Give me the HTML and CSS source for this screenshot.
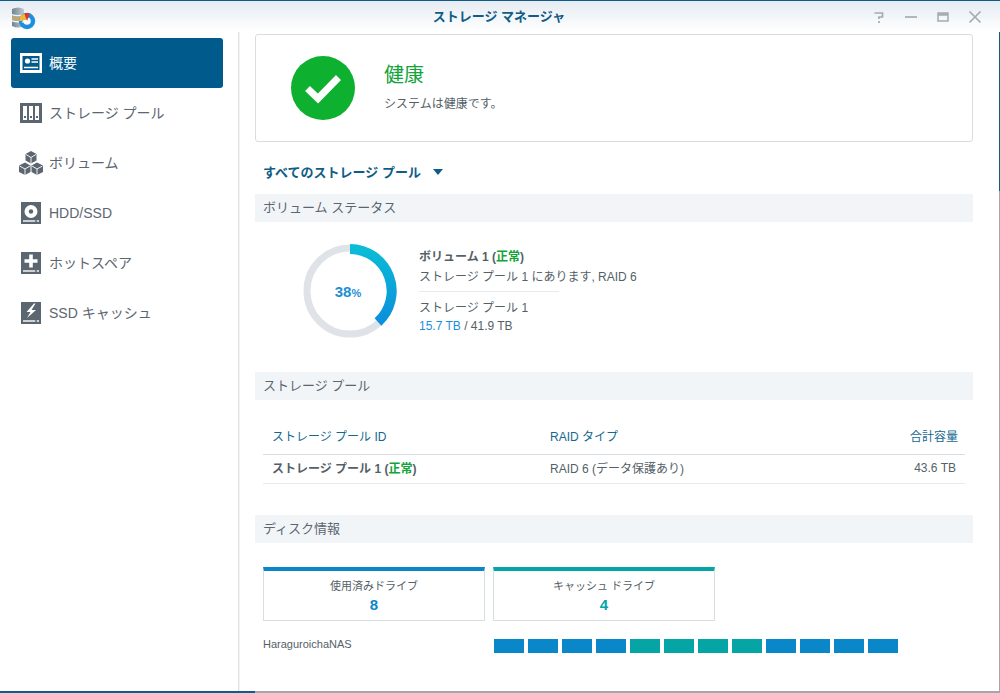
FILE: index.html
```html
<!DOCTYPE html>
<html lang="ja">
<head>
    <meta charset="UTF-8">
    <title>ストレージ マネージャ</title>
    <link rel="stylesheet" href="styles.css">
</head>
<body>
    <div class="window">
        <header class="titlebar">
            <svg class="app-icon" viewBox="0 0 24 24" width="24" height="24">
                <defs>
                    <linearGradient id="dbFill" x1="0" y1="0" x2="1" y2="0">
                        <stop offset="0" stop-color="#6f8494"/>
                        <stop offset="1" stop-color="#c3cbd0"/>
                    </linearGradient>
                </defs>
                <path d="M0 3 Q6 0 12 3 V8 Q6 10 0 8Z M0 9.5 Q6 11.5 12 9.5 V14 Q6 16 0 14Z M0 15.5 Q6 17.5 12 15.5 V20 Q6 23 0 20Z" fill="url(#dbFill)"/>
                <path d="M0 9.5 Q6 11.5 12 9.5 V14 Q6 16 0 14Z" fill="#b9a878"/>
                <circle cx="15" cy="15" r="6" fill="none" stroke="#1d8fe0" stroke-width="4.4"/>
                <path d="M15 15 L7 15 A8 8 0 0 1 12.5 7.4 Z" fill="#f0b53a"/>
                <path d="M15 15 L12.5 7.4 A8 8 0 0 1 18 7.6 Z" fill="#d8382e"/>
                <path d="M9.5 16.5H15V14H12Z" fill="#fff"/>
            </svg>
            <h1 class="title">ストレージ マネージャ</h1>
            <div class="win-buttons">
                <svg viewBox="0 0 14 14" width="14" height="14"><path d="M2.5 3 H10.5 V7 H7 V9 M7 11 V13" fill="none" stroke="#a3abb2" stroke-width="1.7"/></svg>
                <svg viewBox="0 0 14 14" width="14" height="14"><path d="M1 7 H13" stroke="#a3abb2" stroke-width="1.7"/></svg>
                <svg viewBox="0 0 14 14" width="14" height="14"><path d="M2 3 H12 V11 H2 Z" fill="none" stroke="#a3abb2" stroke-width="1.5"/><path d="M2 4.5 H12" stroke="#a3abb2" stroke-width="2.5"/></svg>
                <svg viewBox="0 0 14 14" width="14" height="14"><path d="M1.5 1.5 L12.5 12.5 M12.5 1.5 L1.5 12.5" stroke="#a3abb2" stroke-width="1.7"/></svg>
            </div>
        </header>

        <div class="body-row">
            <nav class="sidebar">
                <a class="nav-item active">
                    <svg viewBox="0 0 22 20" width="22" height="20"><path fill-rule="evenodd" fill="currentColor" d="M0 0H22V20H0Z M2.5 3V17H19.5V3Z"/><circle cx="7.5" cy="8" r="2.6" fill="currentColor"/><path d="M4 14.5H18M11.5 6H18M11.5 9H18" stroke="currentColor" stroke-width="1.5"/></svg>
                    <span>概要</span>
                </a>
                <a class="nav-item">
                    <svg viewBox="0 0 22 20" width="22" height="20"><path fill-rule="evenodd" fill="currentColor" d="M0 0H22V20H0Z M3 3V17H7V3Z M9 3V17H13V3Z M15 3V17H19V3Z"/><path d="M4 13H6V15H4Z M10 13H12V15H10Z M16 13H18V15H16Z" fill="currentColor"/></svg>
                    <span>ストレージ プール</span>
                </a>
                <a class="nav-item">
                    <svg class="cubes" viewBox="0 0 26 26" width="26" height="26">
                        <path fill="currentColor" d="M13 1L18.5 4V10.5L13 13.5L7.5 10.5V4Z M7 12.5L12.5 15.5V22L7 25L1 22V15.5Z M19 12.5L25 15.5V22L19 25L13.5 22V15.5Z"/>
                        <path d="M8 4.5L13 7.5L18 4.5M13 7.5V13M1.5 16L7 19L12 16M7 19V25M14 16L19 19L24.5 16M19 19V25" fill="none" stroke="#fff" stroke-width="0.9"/>
                    </svg>
                    <span>ボリューム</span>
                </a>
                <a class="nav-item">
                    <svg viewBox="0 0 20 22" width="20" height="22"><path fill="currentColor" fill-rule="evenodd" d="M0 0H20V22H0Z M10 3A6.5 6.5 0 1 0 10 16A6.5 6.5 0 1 0 10 3Z"/><circle cx="10" cy="9.5" r="2.2" fill="currentColor"/><path d="M2 19H18" stroke="#fff" stroke-width="1.4"/><path d="M14 19H16" stroke="currentColor" stroke-width="1.4"/></svg>
                    <span class="latin">HDD/SSD</span>
                </a>
                <a class="nav-item">
                    <svg viewBox="0 0 20 22" width="20" height="22"><path fill="currentColor" d="M0 0H20V22H0Z"/><path d="M10 2.5V15.5M3.5 9H16.5" stroke="#fff" stroke-width="3.6"/><path d="M2 19H18" stroke="#fff" stroke-width="1.4"/><path d="M14 19H16" stroke="currentColor" stroke-width="1.4"/></svg>
                    <span>ホットスペア</span>
                </a>
                <a class="nav-item">
                    <svg viewBox="0 0 20 22" width="20" height="22"><path fill="currentColor" d="M0 0H20V22H0Z"/><path d="M13 1.5L5.5 10H9.5L6 16L15 8H10.5L14.5 1.5Z" fill="#fff"/><path d="M2 19H18" stroke="#fff" stroke-width="1.4"/><path d="M14 19H16" stroke="currentColor" stroke-width="1.4"/></svg>
                    <span>SSD キャッシュ</span>
                </a>
            </nav>

            <main class="content">
                <section class="health">
                    <svg class="health-icon" viewBox="0 0 64 64" width="64" height="64">
                        <circle cx="32" cy="32" r="32" fill="#0eb02f"/>
                        <path d="M16.5 32.5L27 42.5L47.5 21.5" fill="none" stroke="#fff" stroke-width="7"/>
                    </svg>
                    <div>
                        <div class="health-title">健康</div>
                        <div class="health-sub">システムは健康です。</div>
                    </div>
                </section>

                <div class="pool-select">すべてのストレージ プール <span class="caret"></span></div>

                <h2 class="section-head">ボリューム ステータス</h2>
                <div class="volume">
                    <div class="donut">
                        <svg viewBox="0 0 94 94" width="94" height="94">
                            <defs>
                                <linearGradient id="ringFill" x1="0" y1="0" x2="0" y2="1">
                                    <stop offset="0" stop-color="#0abcd6"/>
                                    <stop offset="1" stop-color="#0a8fdc"/>
                                </linearGradient>
                            </defs>
                            <circle cx="47" cy="47" r="43" fill="none" stroke="#dfe3e7" stroke-width="7"/>
                            <path d="M47 5 A42 42 0 0 1 75 78" fill="none" stroke="url(#ringFill)" stroke-width="10"/>
                        </svg>
                        <div class="donut-label">38<small>%</small></div>
                    </div>
                    <div class="volume-info">
                        <div class="vol-name">ボリューム 1 (<span class="ok">正常</span>)</div>
                        <div>ストレージ プール 1 にあります, RAID 6</div>
                        <hr class="vol-rule">
                        <div>ストレージ プール 1</div>
                        <div class="vol-usage"><span class="used">15.7 TB</span> / 41.9 TB</div>
                    </div>
                </div>

                <h2 class="section-head">ストレージ プール</h2>
                <table class="pool-table">
                    <thead>
                        <tr><th>ストレージ プール ID</th><th>RAID タイプ</th><th class="right">合計容量</th></tr>
                    </thead>
                    <tbody>
                        <tr><td class="pool-name">ストレージ プール 1 (<span class="ok">正常</span>)</td><td>RAID 6 (データ保護あり)</td><td class="right">43.6 TB</td></tr>
                    </tbody>
                </table>

                <h2 class="section-head">ディスク情報</h2>
                <div class="disk-cards">
                    <div class="disk-card blue">
                        <div class="card-label">使用済みドライブ</div>
                        <div class="card-num">8</div>
                    </div>
                    <div class="disk-card teal">
                        <div class="card-label">キャッシュ ドライブ</div>
                        <div class="card-num">4</div>
                    </div>
                </div>
                <div class="bay-row">
                    <div class="nas-name">HaraguroichaNAS</div>
                    <div class="bays">
                        <i class="bay"></i><i class="bay"></i><i class="bay"></i><i class="bay"></i>
                        <i class="bay cache"></i><i class="bay cache"></i><i class="bay cache"></i><i class="bay cache"></i>
                        <i class="bay"></i><i class="bay"></i><i class="bay"></i><i class="bay"></i>
                    </div>
                </div>
            </main>
        </div>
    </div>
</body>
</html>
```

FILE: styles.css
```css
* {
    box-sizing: border-box;
}

html, body {
    height: 100%;
    margin: 0;
    overflow: hidden;
}

body {
    font-family: "Liberation Sans", "Noto Sans CJK JP", sans-serif;
    font-size: 12px;
    color: #555f68;
    background: #fff;
}

.window {
    position: relative;
    height: 693px;
    border-top: 1px solid #0f5c86;
    display: flex;
    flex-direction: column;
}

.window::before {
    content: "";
    position: absolute;
    top: 0;
    right: 0;
    bottom: 0;
    width: 1px;
    background: linear-gradient(#0f5c86 190px, #a3a7ab 190px);
}

.window::after {
    content: "";
    position: absolute;
    left: 0;
    right: 0;
    bottom: 0;
    height: 2px;
    background: linear-gradient(90deg, #0f5c86 255px, #a3a7ab 255px);
}

.titlebar {
    height: 31px;
    flex: none;
    display: flex;
    align-items: center;
    position: relative;
    background: linear-gradient(#e6ecf2, #fff);
}

.app-icon {
    margin-left: 12px;
    margin-top: 2px;
}

.title {
    position: absolute;
    left: 0;
    right: 2px;
    margin: 0;
    text-align: center;
    font-size: 13px;
    font-weight: 700;
    line-height: 28px;
    color: #0f5c86;
}

.win-buttons {
    margin-left: auto;
    margin-right: 18px;
    display: flex;
    gap: 18px;
}

.body-row {
    flex: 1;
    display: flex;
    min-height: 0;
}

.sidebar {
    width: 239px;
    flex: none;
    margin-right: 1px;
    padding: 6px 15px 0 11px;
    border-right: 1px solid #e0e3e6;
    box-shadow: 1px 0 0 #f1f3f4;
}

.nav-item {
    height: 50px;
    display: flex;
    align-items: center;
    padding-left: 9px;
    padding-bottom: 2px;
    gap: 7px;
    font-size: 14px;
    color: #5b6670;
    border-radius: 3px;
}

.nav-item svg {
    width: 22px;
    flex: none;
    margin-top: 2px;
}

.nav-item .cubes {
    width: 26px;
    margin: 2px -2px 0;
}

.nav-item .latin {
    margin-top: 2px;
}

.nav-item.active {
    background: #005a8c;
    color: #fff;
}

.content {
    flex: 1;
    padding: 2px 27px 0 15px;
    min-width: 0;
}

.health {
    height: 108px;
    border: 1px solid #d8dde1;
    border-radius: 3px;
    display: flex;
    align-items: center;
    padding-left: 35px;
    gap: 29px;
}

.health-title {
    font-size: 20px;
    color: #12a33a;
    line-height: 28px;
    margin-top: -4px;
}

.health-sub {
    margin-top: 7px;
    line-height: 16px;
}

.pool-select {
    margin: 21px 0 0 8px;
    height: 31px;
    font-size: 13px;
    font-weight: 700;
    color: #0f5c86;
    line-height: 20px;
}

.caret {
    display: inline-block;
    margin-left: 8px;
    vertical-align: 2px;
    border-left: 5.5px solid transparent;
    border-right: 5.5px solid transparent;
    border-top: 6px solid #0f5c86;
}

.section-head {
    margin: 0;
    height: 28px;
    padding-left: 8px;
    background: #f2f5f8;
    font-size: 13px;
    font-weight: 400;
    line-height: 27px;
    color: #5b6670;
}

.volume {
    height: 150px;
    display: flex;
    padding: 22px 0 0 48px;
}

.donut {
    position: relative;
    width: 94px;
    height: 94px;
}

.donut-label {
    position: absolute;
    inset: 0;
    display: flex;
    align-items: center;
    justify-content: center;
    padding: 1px 4px 0 0;
    font-size: 15px;
    font-weight: 700;
    color: #1d8fd6;
}

.donut-label small {
    font-size: 11px;
    padding-top: 2px;
}

.volume-info {
    margin: 4px 0 0 22px;
    line-height: 20px;
}

.vol-name {
    font-weight: 700;
    line-height: 19px;
}

.ok {
    color: #12a33a;
}

.used {
    color: #1d8fd6;
}

.vol-rule {
    margin: 4px 0 6px;
    width: 140px;
    border: 0;
    border-top: 1px solid #e8ebee;
}

.vol-usage {
    margin-top: -1px;
    line-height: 18px;
}

.pool-table {
    margin: 20px 0 31px 8px;
    width: 702px;
    border-collapse: collapse;
}

.pool-table th {
    height: 34px;
    padding: 0 7px 2px 9px;
    font-weight: 400;
    text-align: left;
    color: #14688f;
    border-bottom: 1px solid #d8dde1;
}

.pool-table td {
    height: 29px;
    padding: 0 7px 2px 9px;
    border-bottom: 1px solid #e8ebee;
}

.pool-table th:nth-child(1) {
    width: 278px;
}

.pool-table .right {
    text-align: right;
}

.pool-table td.right {
    padding-right: 9px;
}

.pool-name {
    font-weight: 700;
}

.disk-cards {
    margin: 24px 0 0 8px;
    display: flex;
    gap: 8px;
}

.disk-card {
    width: 222px;
    height: 54px;
    border: 1px solid #d8dde1;
    border-top: 4px solid;
    text-align: center;
    font-size: 11px;
}

.disk-card.blue {
    border-top-color: #0a87c9;
}

.disk-card.teal {
    border-top-color: #05a5a5;
}

.card-label {
    margin-top: 8px;
    line-height: 15px;
}

.card-num {
    font-size: 15px;
    font-weight: 700;
    line-height: 22px;
}

.blue .card-num {
    color: #0a87c9;
}

.teal .card-num {
    color: #05a5a5;
}

.bay-row {
    margin: 18px 0 0 8px;
    display: flex;
}

.nas-name {
    width: 231px;
    font-size: 11px;
    line-height: 11px;
}

.bays {
    display: flex;
    gap: 4px;
}

.bay {
    width: 30px;
    height: 14px;
    background: #0a87c9;
}

.bay.cache {
    background: #05a5a5;
}
```
